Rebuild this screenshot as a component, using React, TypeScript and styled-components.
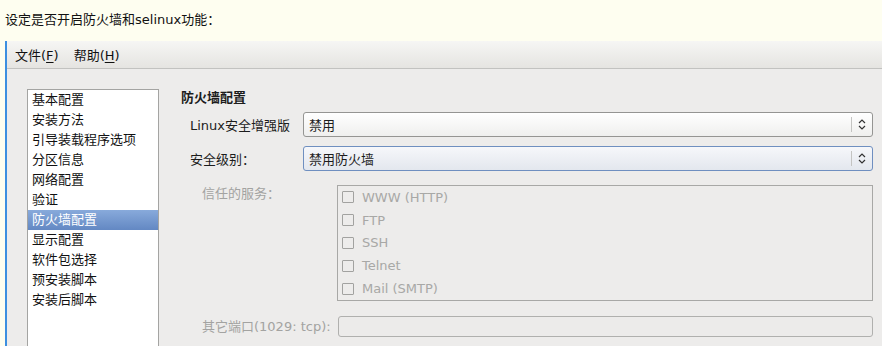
import React from "react";
import styled, { createGlobalStyle } from "styled-components";

const GlobalStyle = createGlobalStyle`
  html, body {
    margin: 0;
    padding: 0;
    height: 346px;
    overflow: hidden;
    background: #fefef0;
  }
  body {
    font-family: "DejaVu Sans", "Noto Sans CJK SC", sans-serif;
    font-size: 13px;
    color: #1c1c1c;
  }
`;

const pages = [
  "基本配置",
  "安装方法",
  "引导装载程序选项",
  "分区信息",
  "网络配置",
  "验证",
  "防火墙配置",
  "显示配置",
  "软件包选择",
  "预安装脚本",
  "安装后脚本",
];

const services = ["WWW (HTTP)", "FTP", "SSH", "Telnet", "Mail (SMTP)"];

const ComboArrows = () => (
  <svg width="8" height="11" viewBox="0 0 8 11">
    <path d="M1 4 L4 1 L7 4" fill="none" stroke="#333" strokeWidth="1.2" />
    <path d="M1 7 L4 10 L7 7" fill="none" stroke="#333" strokeWidth="1.2" />
  </svg>
);

const App = () => {
  return (
    <>
      <GlobalStyle />
      <Page>
        <Caption>设定是否开启防火墙和selinux功能：</Caption>
        <Window>
          <MenuBar>
            <MenuItem>
              文件(<u>F</u>)
            </MenuItem>
            <MenuItem>
              帮助(<u>H</u>)
            </MenuItem>
          </MenuBar>
          <Body>
            <PageList>
              {pages.map((p) => (
                <PageItem key={p} selected={p === "防火墙配置"}>
                  {p}
                </PageItem>
              ))}
            </PageList>
            <Main>
              <Heading>防火墙配置</Heading>
              <FormRow>
                <Label>Linux安全增强版</Label>
                <Combo>
                  <ComboText>禁用</ComboText>
                  <ComboSep />
                  <ComboArrows />
                </Combo>
              </FormRow>
              <FormRow>
                <Label>安全级别：</Label>
                <Combo focused>
                  <ComboText>禁用防火墙</ComboText>
                  <ComboSep />
                  <ComboArrows />
                </Combo>
              </FormRow>
              <DisabledRow>
                <DisabledLabel>信任的服务：</DisabledLabel>
                <ServiceFrame>
                  {services.map((s) => (
                    <ServiceItem key={s}>
                      <CheckBox />
                      {s}
                    </ServiceItem>
                  ))}
                </ServiceFrame>
              </DisabledRow>
              <PortRow>
                <DisabledLabel>其它端口(1029: tcp):</DisabledLabel>
                <PortEntry />
              </PortRow>
            </Main>
          </Body>
        </Window>
      </Page>
    </>
  );
};

export default App;

const Page = styled.div`
  display: flex;
  flex-direction: column;
  height: 346px;
`;

const Caption = styled.div`
  height: 41px;
  padding-left: 5px;
  line-height: 40px;
  font-size: 13px;
  color: #111;
`;

const Window = styled.div`
  flex: 1;
  margin-left: 5px;
  border-left: 2px solid #3d8fe0;
  background: #edeceb;
  display: flex;
  flex-direction: column;
  min-height: 0;
`;

const MenuBar = styled.div`
  height: 27px;
  display: flex;
  align-items: center;
  gap: 15px;
  padding-left: 8px;
  background: linear-gradient(#f6f6f4, #e5e4e1);
  border-bottom: 1px solid #c2c2c0;
`;

const MenuItem = styled.span`
  color: #111;
  u {
    text-decoration: underline;
    text-underline-offset: 2px;
  }
`;

const Body = styled.div`
  flex: 1;
  display: flex;
  gap: 22px;
  padding: 20px 9px 0 20px;
  min-height: 0;
`;

const PageList = styled.div`
  width: 130px;
  border: 1px solid #a4a4a2;
  border-bottom: none;
  background: #fff;
  display: flex;
  flex-direction: column;
`;

const PageItem = styled.div<{ selected?: boolean }>`
  height: 20px;
  line-height: 20px;
  padding-left: 4px;
  white-space: nowrap;
  color: ${(p) => (p.selected ? "#fff" : "#111")};
  background: ${(p) =>
    p.selected ? "linear-gradient(#88aadb, #6388c3)" : "transparent"};
`;

const Main = styled.div`
  flex: 1;
  display: flex;
  flex-direction: column;
`;

const Heading = styled.div`
  height: 18px;
  line-height: 18px;
  font-weight: bold;
  margin-bottom: 5px;
`;

const FormRow = styled.div`
  display: flex;
  align-items: center;
  padding-left: 9px;
  margin-bottom: 9px;
`;

const Label = styled.div`
  width: 113px;
  white-space: nowrap;
`;

const Combo = styled.div<{ focused?: boolean }>`
  flex: 1;
  height: 25px;
  box-sizing: border-box;
  border: 1px solid ${(p) => (p.focused ? "#6f8fc0" : "#959593")};
  border-radius: 3px;
  background: ${(p) =>
    p.focused
      ? "linear-gradient(#f6f7fa, #e3e7ee)"
      : "linear-gradient(#ffffff, #efefee)"};
  display: flex;
  align-items: center;
  padding: 0 6px 0 5px;
  gap: 6px;
`;

const ComboText = styled.span`
  flex: 1;
`;

const ComboSep = styled.span`
  width: 1px;
  height: 15px;
  background: #c4c4c2;
`;

const DisabledRow = styled.div`
  display: flex;
  align-items: flex-start;
  padding-left: 21px;
  margin-top: 5px;
`;

const DisabledLabel = styled.div`
  width: 135px;
  color: #a3a3a1;
  white-space: nowrap;
  line-height: 16px;
  padding-top: 1px;
`;

const ServiceFrame = styled.div`
  flex: 1;
  height: 116px;
  box-sizing: border-box;
  border: 1px solid #a8a8a6;
  display: flex;
  flex-direction: column;
`;

const ServiceItem = styled.div`
  height: 23px;
  display: flex;
  align-items: center;
  gap: 8px;
  padding-left: 4px;
  color: #a8a8a6;
`;

const CheckBox = styled.span`
  width: 12px;
  height: 12px;
  box-sizing: border-box;
  border: 1px solid #a2a2a0;
  border-radius: 1px;
`;

const PortRow = styled.div`
  display: flex;
  align-items: center;
  padding-left: 21px;
  margin-top: 15px;
`;

const PortEntry = styled.div`
  flex: 1;
  height: 21px;
  margin-left: 1px;
  box-sizing: border-box;
  border: 1px solid #b0b0ae;
  border-radius: 3px;
  background: #ecebea;
`;
